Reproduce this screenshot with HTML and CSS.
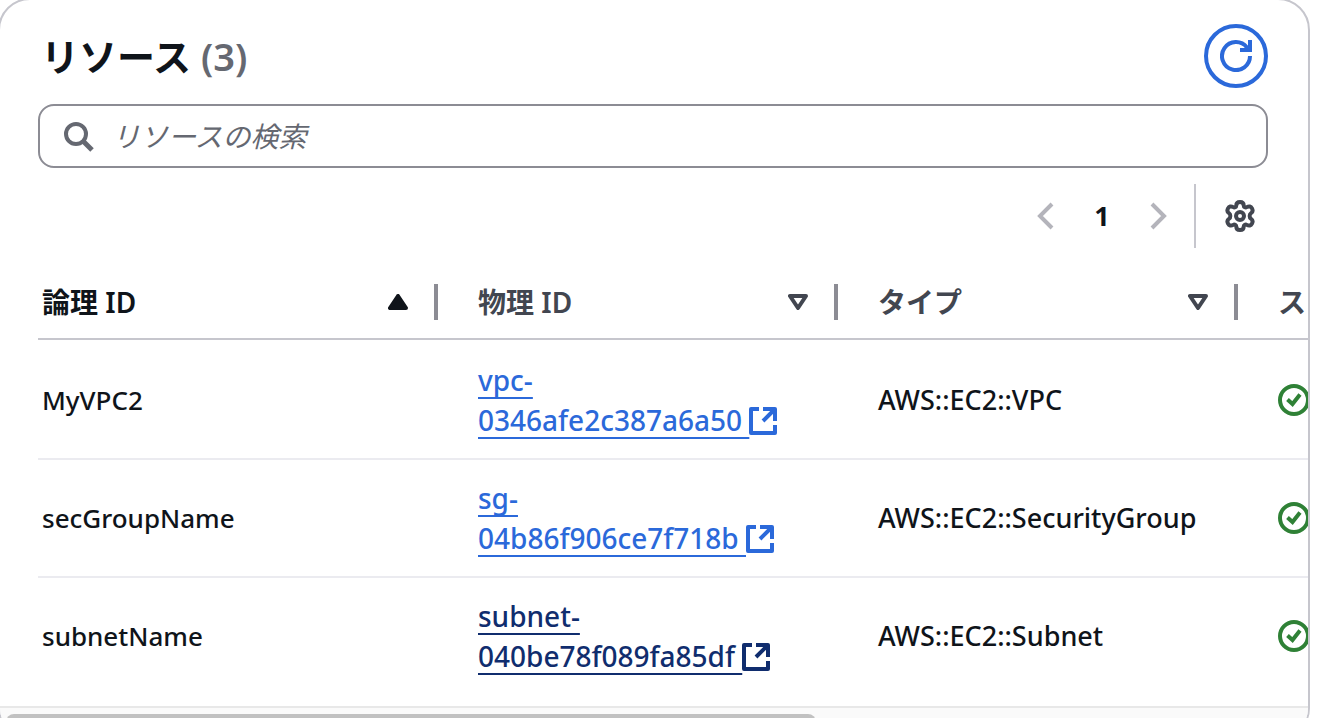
FILE: index.html
```
<!DOCTYPE html>
<html lang="ja">
<head>
<meta charset="utf-8">
<meta name="viewport" content="width=device-width, initial-scale=1">
<title>リソース</title>
<link rel="stylesheet" href="styles.css">
</head>
<body>
<svg class="sprite" aria-hidden="true">
  <symbol id="external" viewBox="0 0 28 28"><path d="M10 2H2v24h24v-8M14 2h12v12M26 2L14 14" fill="none" stroke="currentColor" stroke-width="4" stroke-linejoin="round"/></symbol>
  <symbol id="success" viewBox="0 0 32 32"><circle cx="16" cy="16" r="14" fill="none" stroke="currentColor" stroke-width="4"/><path d="M9.500 15.500l5 4.500 7.500-9.500" fill="none" stroke="currentColor" stroke-width="4"/></symbol>
  <symbol id="sortable" viewBox="0 0 20 16"><path d="M2 2h16l-8 12z" fill="none" stroke="currentColor" stroke-width="4" stroke-linejoin="round"/></symbol>
  <symbol id="ascending" viewBox="0 0 20 16"><path d="M2 14h16L10 2z" fill="currentColor" stroke="currentColor" stroke-width="4" stroke-linejoin="round"/></symbol>
</svg>
<main class="card">
  <header class="card-header">
    <h2 class="title">リソース <span class="count">(3)</span></h2>
    <button class="refresh" type="button" aria-label="更新">
      <svg class="icon" viewBox="0 0 32 32" fill="none" stroke="currentColor" stroke-width="4"><path d="M20 10h10V0M30 16a14 14 0 1 1-3-8.600l2 2.600"/></svg>
    </button>
  </header>
  <label class="search">
    <svg class="icon" viewBox="0 0 32 32" fill="none" stroke="currentColor"><circle cx="14" cy="14" r="10" stroke-width="4"/><path d="M21 21l9 9" stroke-width="5"/></svg>
    <input class="search-input" type="search" placeholder="リソースの検索" aria-label="リソースの検索">
  </label>
  <div class="tools">
    <nav class="pages" aria-label="ページ">
      <button class="page-step" type="button" disabled aria-label="前へ"><svg class="icon" viewBox="0 0 32 32" fill="none" stroke="currentColor" stroke-width="4"><path d="M22 4L10 16l12 12"/></svg></button>
      <button class="page" type="button" aria-current="page">1</button>
      <button class="page-step" type="button" disabled aria-label="次へ"><svg class="icon" viewBox="0 0 32 32" fill="none" stroke="currentColor" stroke-width="4"><path d="M10 4l12 12-12 12"/></svg></button>
    </nav>
    <button class="settings" type="button" aria-label="設定">
      <svg class="icon" viewBox="0 0 32 32" fill="none" stroke="currentColor" stroke-width="4" stroke-linejoin="round"><path d="M12.300 5.500C12.300 3 13.500 2 16 2s3.700 1 3.700 3.500c0 1.500 1.800 2.300 3.100 1.600 2.200-1.300 4.100-.8 5.200 1.300s.9 3.600-1.200 5c-1.500 1-1.500 4.200 0 5.200 2.100 1.400 2.300 2.900 1.200 5s-3 2.600-5.200 1.300c-1.300-.7-3.100.1-3.100 1.600 0 2.500-1.200 3.500-3.700 3.500s-3.700-1-3.700-3.500c0-1.500-1.800-2.300-3.100-1.600-2.200 1.300-4.100.8-5.200-1.300s-.9-3.600 1.200-5c1.500-1 1.500-4.200 0-5.200-2.100-1.400-2.300-2.900-1.200-5s3-2.600 5.200-1.300c1.300.7 3.100-.1 3.100-1.600z"/><circle cx="16" cy="16" r="4"/></svg>
    </button>
  </div>
  <div class="table-area">
    <table class="table">
      <thead>
        <tr>
          <th scope="col" aria-sort="ascending"><button class="sort active" type="button">論理 ID<svg class="caret"><use href="#ascending"/></svg></button></th>
          <th scope="col"><button class="sort" type="button">物理 ID<svg class="caret"><use href="#sortable"/></svg></button></th>
          <th scope="col"><button class="sort" type="button">タイプ<svg class="caret"><use href="#sortable"/></svg></button></th>
          <th scope="col"><button class="sort" type="button">ス<svg class="caret"><use href="#sortable"/></svg></button></th>
        </tr>
      </thead>
      <tbody>
        <tr>
          <td>MyVPC2</td>
          <td class="physical"><a class="link" href="#vpc">vpc-<br>0346afe2c387a6a50&nbsp;<svg class="external"><use href="#external"/></svg></a></td>
          <td>AWS::EC2::VPC</td>
          <td><svg class="status" role="img" aria-label="完了"><use href="#success"/></svg></td>
        </tr>
        <tr>
          <td>secGroupName</td>
          <td class="physical"><a class="link" href="#sg">sg-<br>04b86f906ce7f718b&nbsp;<svg class="external"><use href="#external"/></svg></a></td>
          <td>AWS::EC2::SecurityGroup</td>
          <td><svg class="status" role="img" aria-label="完了"><use href="#success"/></svg></td>
        </tr>
        <tr>
          <td>subnetName</td>
          <td class="physical"><a class="link hovered" href="#subnet">subnet-<br>040be78f089fa85df&nbsp;<svg class="external"><use href="#external"/></svg></a></td>
          <td>AWS::EC2::Subnet</td>
          <td><svg class="status" role="img" aria-label="完了"><use href="#success"/></svg></td>
        </tr>
      </tbody>
    </table>
  </div>
  <div class="scrollbar"><div class="thumb"></div></div>
</main>
</body>
</html>
```
FILE: styles.css
```
* { box-sizing: border-box; }
html { overflow: hidden; background: #fff; }
body {
  margin: 0;
  color: #0f141a;
  font: 27px/40px "Noto Sans", "Noto Sans CJK JP", sans-serif;
}
button, input { font: inherit; color: inherit; background: none; border: 0; padding: 0; margin: 0; }
.sprite { position: absolute; width: 0; height: 0; }
.card {
  margin: -2px 16px 0 -2px;
  border: 2px solid #c6c6cd;
  border-radius: 32px;
  overflow: hidden;
}
.card-header {
  display: flex;
  justify-content: space-between;
  align-items: center;
  padding: 24px 40px 0 41px;
}
.title { margin: 0; font-size: 38px; line-height: 62px; font-weight: 700; }
.count { color: #656871; font-weight: 600; }
.icon { display: block; width: 32px; height: 32px; flex: none; }
.refresh {
  display: grid;
  place-items: center;
  width: 64px;
  height: 64px;
  border: 4px solid #2b69da;
  border-radius: 50%;
  color: #2b69da;
}
.search {
  display: flex;
  align-items: center;
  gap: 18px;
  height: 64px;
  margin: 16px 40px 0 38px;
  padding: 0 22px;
  border: 2px solid #8c8c94;
  border-radius: 16px;
  color: #656871;
}
.search-input { flex: 1; min-width: 0; outline: 0; appearance: none; color: #0f141a; font-size: 28px; }
.search-input::placeholder { color: #656871; font-style: italic; opacity: 1; }
.tools { display: flex; justify-content: flex-end; margin-top: 16px; padding-right: 40px; }
.pages { display: flex; align-items: center; padding-right: 20px; border-right: 2px solid #c6c6cd; }
.page-step { color: #b4b4bb; }
.page { width: 80px; font-weight: 700; }
.settings { display: grid; place-items: center; width: 72px; height: 64px; padding-left: 16px; color: #424650; }
.table-area { overflow: hidden; padding: 16px 0 10px 38px; }
.table { width: 1600px; table-layout: fixed; border-collapse: separate; border-spacing: 0; }
th { padding: 20px 0 18px; text-align: left; border-bottom: 2px solid #c6c6cd; }
.sort {
  display: flex;
  align-items: center;
  justify-content: space-between;
  width: 100%;
  height: 36px;
  padding: 0 26px 0 40px;
  border-right: 4px solid #8c8c94;
  color: #424650;
  font-size: 28px;
  line-height: 36px;
  font-weight: 600;
}
.sort.active { color: #0f141a; }
.caret { width: 20px; height: 16px; }
td { padding: 18px 0 18px 40px; border-bottom: 2px solid #ebebf0; vertical-align: middle; font-weight: 500; }
td:first-child { font-size: 26px; }
td:first-child, th:first-child .sort { padding-left: 4px; }
tbody tr:last-child td { border-bottom-color: transparent; }
tbody tr:first-child td { padding-top: 20px; }
.physical { font-size: 28px; }
.link {
  display: block;
  color: #2b69da;
  text-decoration: underline 2px;
  text-underline-offset: 6px;
  text-decoration-skip-ink: none;
}
.link.hovered { color: #102d6e; }
.external { width: 28px; height: 28px; vertical-align: -4px; }
.status { display: block; width: 32px; height: 32px; color: #2f8136; }
.scrollbar { height: 32px; padding: 6px 6px 6px; border-top: 2px solid #e8e8e8; background: #fafafa; }
.thumb { width: 62.500%; height: 16px; border-radius: 8px; background: #c1c1c1; }
```
